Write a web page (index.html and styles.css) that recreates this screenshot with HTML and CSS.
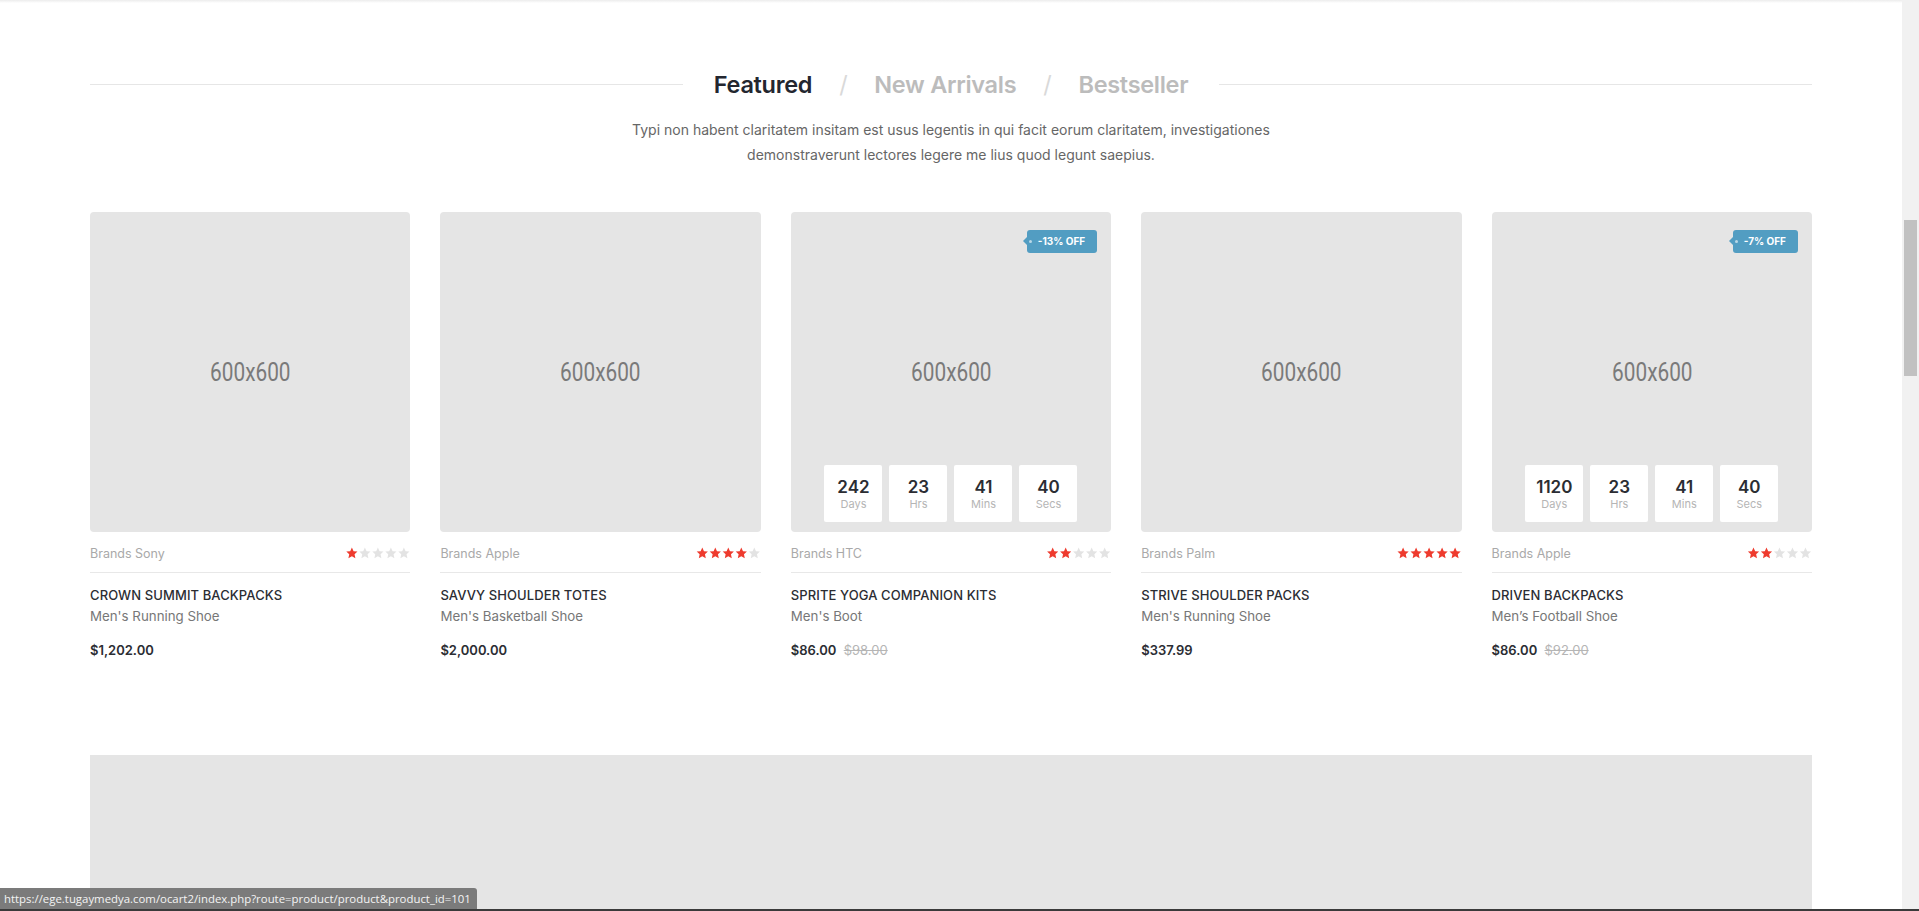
FILE: index.html
```html
<!DOCTYPE html>
<html lang="en">
<head>
<meta charset="utf-8">
<title>Featured Products</title>
<link rel="stylesheet" href="styles.css">
</head>
<body>
<div class="window">
  <main class="page">
    <div class="header-shadow"></div>

    <section class="products">
      <div class="tabs-row">
        <span class="rule"></span>
        <nav class="tabs">
          <a class="tab active">Featured</a>
          <span class="sep">/</span>
          <a class="tab">New Arrivals</a>
          <span class="sep">/</span>
          <a class="tab">Bestseller</a>
        </nav>
        <span class="rule"></span>
      </div>
      <p class="intro">Typi non habent claritatem insitam est usus legentis in qui facit eorum claritatem, investigationes demonstraverunt lectores legere me lius quod legunt saepius.</p>

      <div class="grid">
        <article class="card">
          <div class="thumb"><span class="ph">600x600</span></div>
          <div class="meta"><span class="brand">Brands Sony</span><span class="stars r1"><i></i><i></i><i></i><i></i><i></i></span></div>
          <h3 class="name">CROWN SUMMIT BACKPACKS</h3>
          <p class="sub">Men's Running Shoe</p>
          <p class="price">$1,202.00</p>
        </article>

        <article class="card">
          <div class="thumb"><span class="ph">600x600</span></div>
          <div class="meta"><span class="brand">Brands Apple</span><span class="stars r4"><i></i><i></i><i></i><i></i><i></i></span></div>
          <h3 class="name">SAVVY SHOULDER TOTES</h3>
          <p class="sub">Men's Basketball Shoe</p>
          <p class="price">$2,000.00</p>
        </article>

        <article class="card">
          <div class="thumb">
            <span class="badge">-13% OFF</span>
            <span class="ph">600x600</span>
            <div class="countdown">
              <div class="cell"><b>242</b><span>Days</span></div>
              <div class="cell"><b>23</b><span>Hrs</span></div>
              <div class="cell"><b>41</b><span>Mins</span></div>
              <div class="cell"><b>40</b><span>Secs</span></div>
            </div>
          </div>
          <div class="meta"><span class="brand">Brands HTC</span><span class="stars r2"><i></i><i></i><i></i><i></i><i></i></span></div>
          <h3 class="name">SPRITE YOGA COMPANION KITS</h3>
          <p class="sub">Men's Boot</p>
          <p class="price">$86.00 <s>$98.00</s></p>
        </article>

        <article class="card">
          <div class="thumb"><span class="ph">600x600</span></div>
          <div class="meta"><span class="brand">Brands Palm</span><span class="stars r5"><i></i><i></i><i></i><i></i><i></i></span></div>
          <h3 class="name">STRIVE SHOULDER PACKS</h3>
          <p class="sub">Men's Running Shoe</p>
          <p class="price">$337.99</p>
        </article>

        <article class="card">
          <div class="thumb">
            <span class="badge">-7% OFF</span>
            <span class="ph">600x600</span>
            <div class="countdown">
              <div class="cell"><b>1120</b><span>Days</span></div>
              <div class="cell"><b>23</b><span>Hrs</span></div>
              <div class="cell"><b>41</b><span>Mins</span></div>
              <div class="cell"><b>40</b><span>Secs</span></div>
            </div>
          </div>
          <div class="meta"><span class="brand">Brands Apple</span><span class="stars r2"><i></i><i></i><i></i><i></i><i></i></span></div>
          <h3 class="name">DRIVEN BACKPACKS</h3>
          <p class="sub">Men’s Football Shoe</p>
          <p class="price">$86.00 <s>$92.00</s></p>
        </article>
      </div>
    </section>

    <section class="banner"></section>
  </main>

  <div class="scrollbar"><div class="thumb-bar"></div></div>
</div>

<div class="status">https://ege.tugaymedya.com/ocart2/index.php?route=product/product&amp;product_id=101</div>
<div class="bottom-edge"></div>
</body>
</html>
```

FILE: styles.css
```css
html, body {
  margin: 0;
  padding: 0;
  height: 100%;
  overflow: hidden;
  background: #fff;
}

body {
  font-family: "Inter", "Roboto", "Liberation Sans", sans-serif;
  color: #333;
}

.window {
  display: flex;
  height: 911px;
}

.page {
  flex: 1;
  min-width: 0;
  overflow: hidden;
}

.header-shadow {
  height: 3px;
  background: linear-gradient(#ececec, #fff);
}

/* ---------- product section ---------- */
.products {
  width: 1722px;
  margin: 0 auto;
  padding-top: 61px;
}

.tabs-row {
  display: flex;
  align-items: center;
  height: 40px;
}

.rule {
  flex: 1;
  height: 1px;
  background: #e6e6e6;
}

.tabs {
  display: flex;
  align-items: center;
  padding: 0 31px;
  font-size: 23.5px;
  font-weight: 600;
  letter-spacing: -0.3px;
}

.tab {
  color: #bcbcbc;
}

.tab.active {
  color: #23262f;
}

.sep {
  color: #d9d9d9;
  font-weight: 400;
  margin: 0 27px;
}

.intro {
  width: 680px;
  margin: 13px auto 0;
  text-align: center;
  font-size: 14px;
  line-height: 25px;
  color: #666;
}

.grid {
  display: grid;
  grid-template-columns: repeat(5, 1fr);
  column-gap: 30px;
  margin-top: 45px;
}

.thumb {
  position: relative;
  aspect-ratio: 1 / 1;
  background: #e5e5e5;
  border-radius: 4px;
  display: flex;
  align-items: center;
  justify-content: center;
}

.ph {
  font-family: "Roboto", "Liberation Sans", sans-serif;
  font-size: 26px;
  color: #7a7a7a;
  transform: scaleX(0.8);
}

.badge {
  position: absolute;
  top: 18px;
  right: 14px;
  height: 23px;
  padding: 0 12px 0 11px;
  line-height: 23px;
  background: #529dc2;
  color: #fff;
  font-size: 10px;
  font-weight: 700;
  border-radius: 3px;
}

.badge::before {
  content: "";
  position: absolute;
  left: -4px;
  top: 7px;
  border-style: solid;
  border-width: 4.5px 4px 4.5px 0;
  border-color: transparent #529dc2 transparent transparent;
}

.badge::after {
  content: "";
  position: absolute;
  left: 2px;
  top: 10px;
  width: 3px;
  height: 3px;
  border-radius: 50%;
  background: rgba(255, 255, 255, 0.6);
}

.countdown {
  position: absolute;
  left: 0;
  right: 0;
  bottom: 10px;
  display: flex;
  justify-content: center;
  gap: 7px;
}

.cell {
  width: 58px;
  height: 57px;
  background: #fff;
  border-radius: 2px;
  display: flex;
  flex-direction: column;
  align-items: center;
  justify-content: center;
}

.cell b {
  font-size: 17px;
  font-weight: 600;
  line-height: 20px;
  color: #2b2d33;
}

.cell span {
  font-size: 11px;
  line-height: 14px;
  color: #b5b5b5;
}

.meta {
  display: flex;
  justify-content: space-between;
  align-items: center;
  margin-top: 11px;
  height: 20px;
  padding-bottom: 9px;
  border-bottom: 1px solid #e8e8e8;
}

.brand {
  font-size: 12.5px;
  color: #a9a9a9;
}

.stars {
  display: flex;
}

.stars i {
  width: 13px;
  height: 13px;
  background: #e3e3e3;
  clip-path: polygon(50% 4%, 62.9% 33%, 93% 36%, 70.5% 57%, 76.8% 88%, 50% 72.5%, 23.2% 88%, 29.5% 57%, 7% 36%, 37.1% 33%);
}

.r1 i:nth-child(-n+1),
.r2 i:nth-child(-n+2),
.r4 i:nth-child(-n+4),
.r5 i:nth-child(-n+5) {
  background: #ee3b2e;
}

.name {
  margin: 12px 0 0;
  font-size: 13px;
  font-weight: 500;
  line-height: 20px;
  color: #2b2d33;
  letter-spacing: 0.1px;
}

.sub {
  margin: 1px 0 0;
  font-size: 13.3px;
  line-height: 20px;
  color: #777;
}

.price {
  margin: 14px 0 0;
  font-size: 13px;
  font-weight: 600;
  line-height: 20px;
  color: #2b2d33;
}

.price s {
  margin-left: 4px;
  font-weight: 400;
  color: #b5b5b5;
}

/* ---------- banner below ---------- */
.banner {
  width: 1722px;
  height: 300px;
  margin: 95px auto 0;
  background: #e5e5e5;
}

/* ---------- window chrome ---------- */
.scrollbar {
  width: 17px;
  background: #f1f1f1;
  padding-top: 220px;
  box-sizing: border-box;
}

.thumb-bar {
  width: 13px;
  height: 156px;
  margin-left: 2px;
  background: #c1c1c1;
}

.status {
  position: fixed;
  left: 0;
  bottom: 2px;
  height: 21px;
  padding: 0 6px 0 4px;
  line-height: 21px;
  font-family: "Open Sans", "Liberation Sans", sans-serif;
  font-size: 11.4px;
  color: #f4f4f4;
  background: #7b7b7b;
  border-top-right-radius: 3px;
}

.bottom-edge {
  position: fixed;
  left: 0;
  right: 0;
  bottom: 0;
  height: 2px;
  background: #3a3a3a;
}
```
